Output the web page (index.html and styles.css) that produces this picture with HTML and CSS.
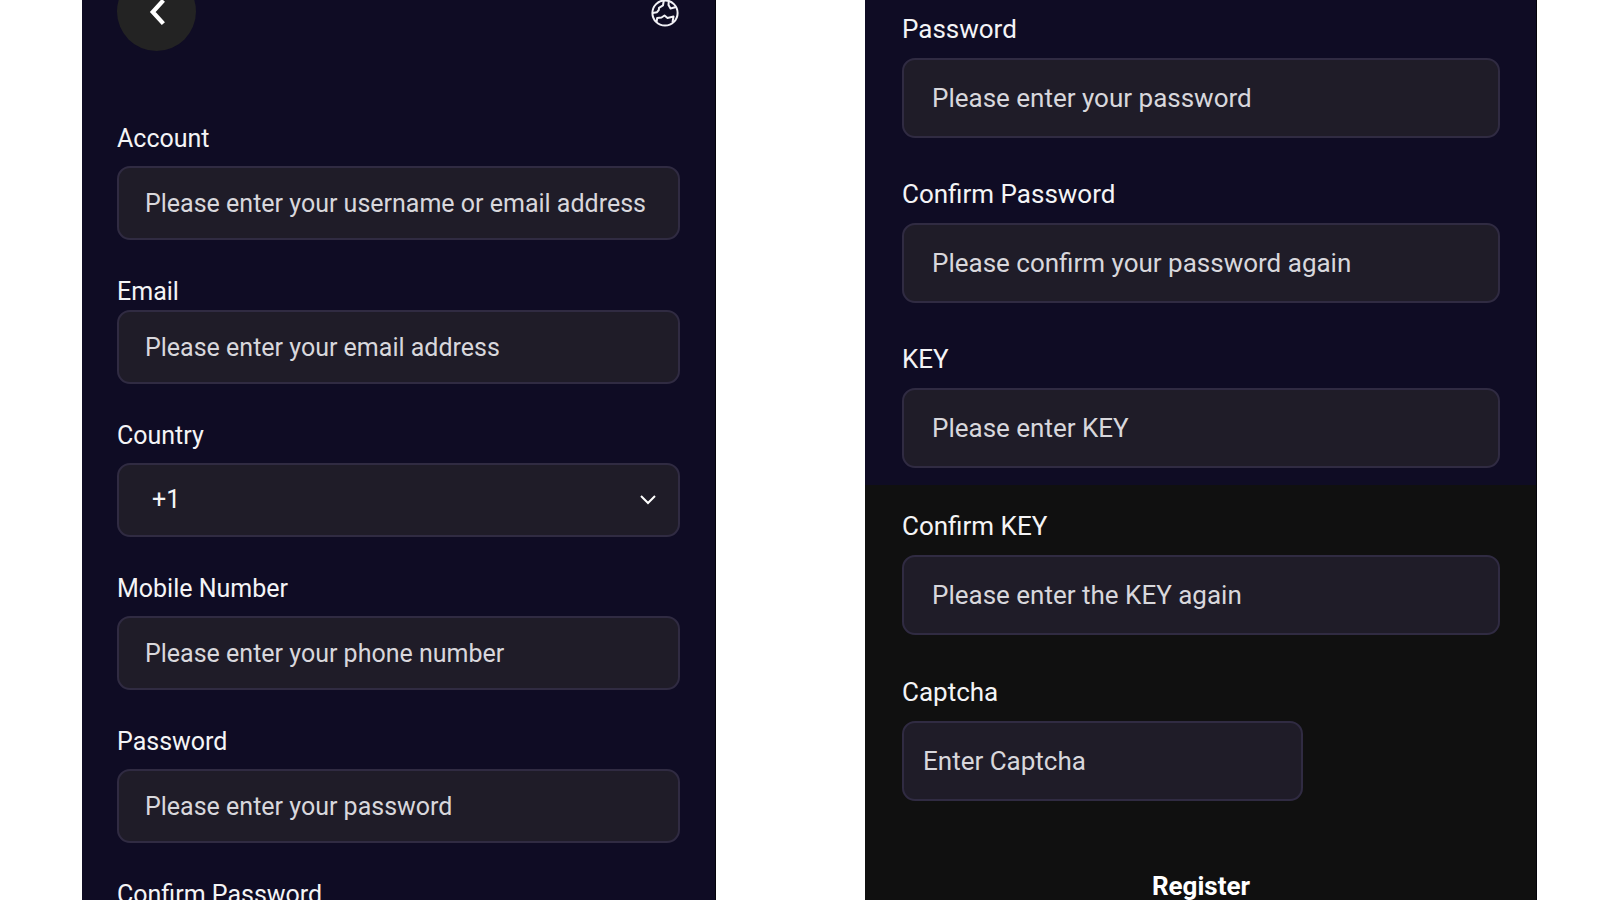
FILE: index.html
```html
<!DOCTYPE html>
<html lang="en">
<head>
<meta charset="utf-8">
<title>Register</title>
<link rel="stylesheet" href="styles.css">
</head>
<body>
<main class="board">
  <form class="panel panel-start">
    <header class="topbar">
      <button class="back" type="button" aria-label="Back">
        <svg class="back-icon" viewBox="0 0 32 32"><path d="M22 5 L12 16 L22 27" fill="none" stroke="#fff" stroke-width="4"/></svg>
      </button>
      <button class="globe" type="button" aria-label="Language">
        <svg class="globe-icon" viewBox="0 0 30 30" fill="none" stroke="#f2f1f6" stroke-width="2" stroke-linejoin="round"><circle cx="15" cy="15" r="12.6"/><path d="M2.5 15 L7 14.200 L8.800 12 L9 9.800 L13 7.400 L13.800 2.500M18.800 2.800 L18.500 7 L20.500 10.500 L26 9M6.500 24 L7.200 20 L11.500 19.500 L14.500 17.500 L17.500 20 L23.500 18.500 L22.500 24.500"/></svg>
      </button>
    </header>
    <div class="field">
      <label for="account">Account</label>
      <input id="account" type="text" placeholder="Please enter your username or email address">
    </div>
    <div class="field field-tight">
      <label for="email">Email</label>
      <input id="email" type="email" placeholder="Please enter your email address">
    </div>
    <div class="field">
      <label for="country">Country</label>
      <div class="select-wrap">
        <select id="country"><option>+1</option></select>
        <svg class="caret" viewBox="0 0 18 12"><path d="M2 2 L9 9 L16 2" fill="none" stroke="#fff" stroke-width="2"/></svg>
      </div>
    </div>
    <div class="field">
      <label for="mobile">Mobile Number</label>
      <input id="mobile" type="tel" placeholder="Please enter your phone number">
    </div>
    <div class="field">
      <label for="password">Password</label>
      <input id="password" type="password" placeholder="Please enter your password">
    </div>
    <div class="field">
      <label for="confirm">Confirm Password</label>
      <input id="confirm" type="password" placeholder="Please confirm your password again">
    </div>
  </form>

  <form class="panel panel-end">
    <section class="upper">
      <div class="field">
        <label for="password2">Password</label>
        <input id="password2" type="password" placeholder="Please enter your password">
      </div>
      <div class="field">
        <label for="confirm2">Confirm Password</label>
        <input id="confirm2" type="password" placeholder="Please confirm your password again">
      </div>
      <div class="field">
        <label for="key">KEY</label>
        <input id="key" type="password" placeholder="Please enter KEY">
      </div>
    </section>
    <section class="lower">
      <div class="field">
        <label for="key2">Confirm KEY</label>
        <input id="key2" type="password" placeholder="Please enter the KEY again">
      </div>
      <div class="field">
        <label for="captcha">Captcha</label>
        <input id="captcha" class="captcha" type="text" placeholder="Enter Captcha">
      </div>
      <button class="register" type="submit">Register</button>
    </section>
  </form>
</main>
</body>
</html>
```
FILE: styles.css
```css
* {
  box-sizing: border-box;
}

body {
  margin: 0;
  background: #fff;
  font-family: Roboto, "Liberation Sans", sans-serif;
}

.board {
  display: grid;
  grid-template-columns: 634fr 672fr;
  column-gap: 149px;
  height: 100vh;
  padding: 0 63px 0 82px;
  overflow: hidden;
}

.panel {
  display: flex;
  flex-direction: column;
  min-width: 0;
  background: #0f0c24;
  color: #f4f4f6;
  border-right: 1px solid #04030a;
}

.panel-start {
  --label-gap: 13px;
  --control-height: 74px;
  padding: 0 35px;
  gap: 38px;
  font-size: 25px;
  line-height: 28px;
}

.panel-end {
  --label-gap: 14px;
  --control-height: 80px;
  font-size: 26px;
  line-height: 30px;
}

.topbar {
  display: flex;
  align-items: center;
  justify-content: space-between;
  margin: -28px 0 36px;
}

.back,
.globe {
  display: grid;
  place-items: center;
  padding: 0;
  border: 0;
  background: none;
}

.back {
  width: 79px;
  height: 79px;
  border-radius: 50%;
  background: #232323;
}

.globe {
  padding-top: 3px;
}

.back-icon {
  width: 34px;
  height: 34px;
}

.globe-icon {
  width: 30px;
  height: 30px;
}

.field {
  display: flex;
  flex-direction: column;
  gap: var(--label-gap);
}

.field-tight {
  gap: 4px;
}

input,
select {
  width: 100%;
  height: var(--control-height);
  padding: 0 26px;
  border: 2px solid #302b42;
  border-radius: 13px;
  background: #1f1c28;
  color: #f4f4f6;
  font: inherit;
}

.panel-end input {
  padding: 0 28px;
}

input::placeholder {
  color: #d8d7dc;
  opacity: 1;
}

.select-wrap {
  display: grid;
  align-items: center;
}

.select-wrap > * {
  grid-area: 1 / 1;
}

select {
  appearance: none;
  padding: 0 33px;
}

.caret {
  justify-self: end;
  width: 18px;
  height: 12px;
  margin-right: 23px;
  pointer-events: none;
}

.upper,
.lower {
  display: flex;
  flex-direction: column;
  padding: 14px 36px 17px 37px;
  gap: 41px;
}

.lower {
  flex: 1;
  padding-top: 26px;
  gap: 42px;
  background: #101010;
}

.panel-end .captcha {
  width: 67%;
  padding: 0 19px;
}

.register {
  height: 86px;
  padding: 0;
  border: 0;
  background: none;
  color: #fff;
  font: inherit;
  font-weight: 700;
}
```
